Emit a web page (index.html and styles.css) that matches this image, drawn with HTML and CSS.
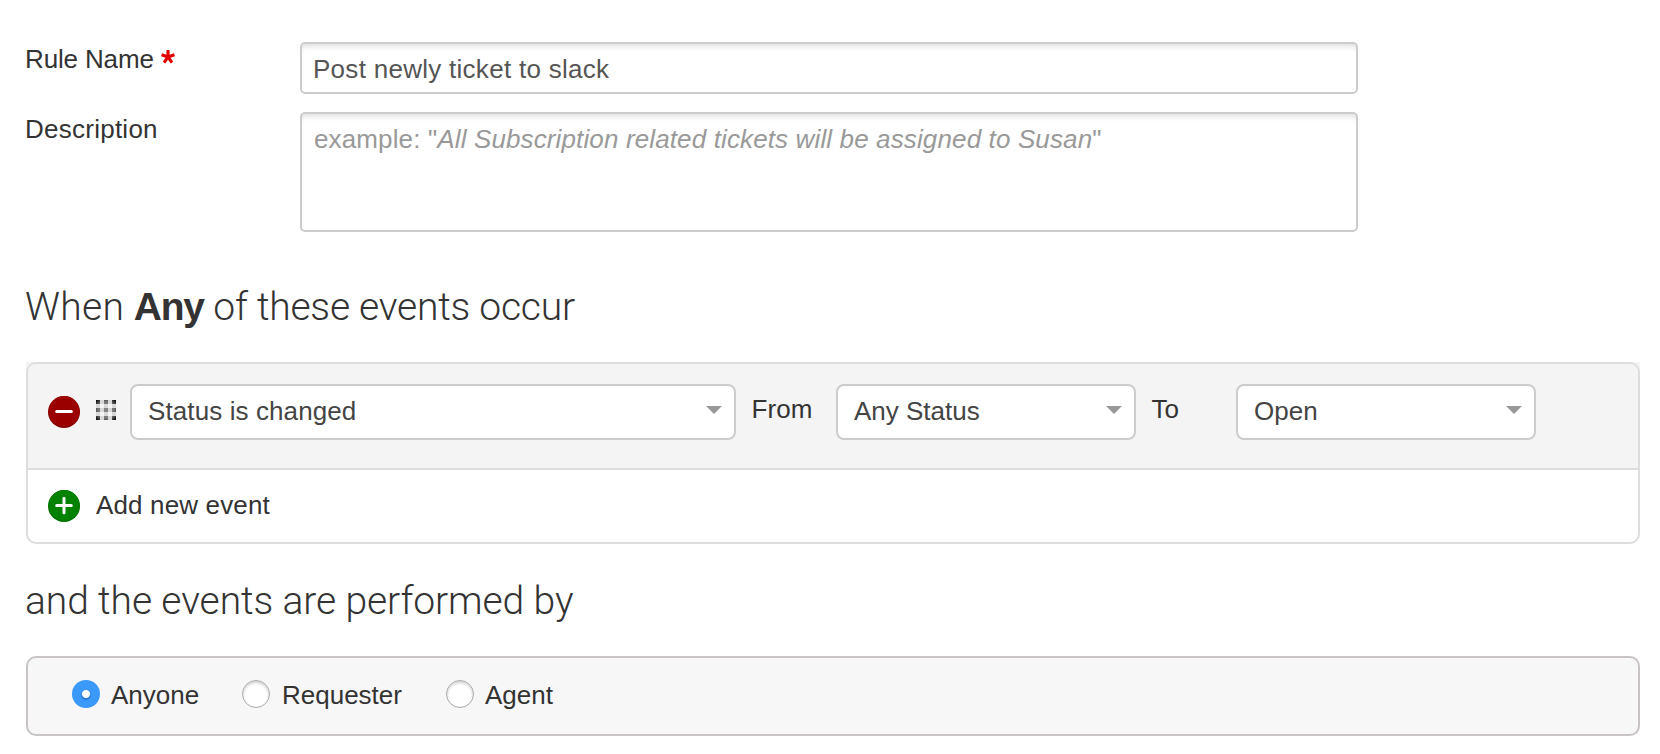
FILE: index.html
```html
<!DOCTYPE html>
<html lang="en">
<head>
<meta charset="utf-8">
<title>Rule</title>
<link rel="stylesheet" href="styles.css">
</head>
<body>
<main class="page">
  <div class="field">
    <div class="label"><span class="rule-label">Rule Name</span><svg class="required" width="14" height="14" viewBox="0 0 14 14"><path d="M7 7V0M7 7L.5 4.8M7 7L13.500 4.800M7 7L3 12.600M7 7L11 12.600" stroke="#e00000" stroke-width="3.100" fill="none"/></svg></div>
    <div class="control name">Post newly ticket to slack</div>
  </div>
  <div class="field">
    <div class="label wide">Description</div>
    <div class="control description">example: "<em>All Subscription related tickets will be assigned to Susan</em>"</div>
  </div>

  <h2 class="heading events-heading"><span class="when">When</span> <strong>Any</strong> <span class="occur">of these events occur</span></h2>
  <div class="events-back">
  <section class="events">
    <div class="event-row">
      <svg class="round" width="32" height="32" viewBox="0 0 32 32"><circle cx="16" cy="16" r="16" fill="#870000"/><circle cx="16.200" cy="15.300" r="15.300" fill="#9b0000"/><path d="M8.700 15.500h14.600" stroke="#fff" stroke-width="3" stroke-linecap="round"/></svg>
      <svg class="grip" width="20" height="20" viewBox="0 0 20 20">
        <defs>
          <radialGradient id="fade" gradientUnits="userSpaceOnUse" cx="10" cy="10" r="14">
            <stop offset="0" stop-color="#888"/><stop offset=".6" stop-color="#777"/><stop offset="1" stop-color="#000"/>
          </radialGradient>
        </defs>
        <path d="M0 2h20M0 10h20M0 18h20M2 0v20M10 0v20M18 0v20" stroke="#d8d8d8" stroke-width="4"/>
        <path fill="url(#fade)" d="M0 0h4v4H0zM8 0h4v4H8zM16 0h4v4h-4zM0 8h4v4H0zM8 8h4v4H8zM16 8h4v4h-4zM0 16h4v4H0zM8 16h4v4H8zM16 16h4v4h-4z"/>
      </svg>
      <div class="select select-event"><span>Status is changed</span><i class="caret"></i></div>
      <span class="word from">From</span>
      <div class="select select-status"><span>Any Status</span><i class="caret"></i></div>
      <span class="word to">To</span>
      <div class="select select-status"><span>Open</span><i class="caret"></i></div>
    </div>
    <div class="add-row">
      <svg class="round" width="32" height="32" viewBox="0 0 32 32"><circle cx="16" cy="16" r="16" fill="#007000"/><circle cx="16.200" cy="15.300" r="15.300" fill="#008200"/><path d="M8.700 15.500h14.600M16 8.200v14.600" stroke="#fff" stroke-width="3" stroke-linecap="round"/></svg>
      <span class="add-text">Add new event</span>
    </div>
  </section>
  </div>

  <h2 class="heading performer-heading">and the events are performed by</h2>
  <section class="performers">
    <label class="option anyone"><i class="radio checked"></i><span>Anyone</span></label>
    <label class="option requester"><i class="radio"></i><span>Requester</span></label>
    <label class="option agent"><i class="radio"></i><span>Agent</span></label>
  </section>
</main>
</body>
</html>
```
FILE: styles.css
```css
* { box-sizing: border-box; }

body {
  margin: 0;
  background: #fff;
  color: #333;
  font: 26px/30px "Liberation Sans", Arial, sans-serif;
}

.page { padding: 42px 20px 0 26px; }

.field {
  display: flex;
  align-items: flex-start;
  margin-bottom: 18px;
}

.label {
  display: flex;
  width: 274px;
  padding-top: 2px;
}

.rule-label { letter-spacing: -0.15px; margin-left: -1px; }
.label.wide { letter-spacing: 0.25px; text-indent: -1px; }
.required { margin: 6px 0 0 7px; }

.control {
  width: 1058px;
  border: 2px solid #ccc;
  border-radius: 5px;
  background: #fff;
  box-shadow: inset 0 7px 6px -5px rgba(0, 0, 0, 0.14);
}

.name {
  height: 52px;
  padding: 10px 11px;
  color: #555;
  letter-spacing: 0.28px;
}

.description {
  height: 120px;
  padding: 10px 12px;
  color: #999;
  letter-spacing: 0.13px;
}

.heading {
  margin: 0 0 0 -1px;
  font: 300 39px/46px Roboto, "Liberation Sans", sans-serif;
  color: #333;
}

.heading strong {
  font-family: "Liberation Sans", Arial, sans-serif;
  font-weight: 700;
  letter-spacing: -1.2px;
}

.events-heading { margin-top: 52px; }
.when { letter-spacing: 0.3px; }
.occur { letter-spacing: -0.23px; }

.events-back {
  width: 1614px;
  margin-top: 32px;
  background: linear-gradient(#f4f4f4 40px, #fff 40px);
}

.events {
  height: 182px;
  border: 2px solid #ddd;
  border-radius: 10px;
  overflow: hidden;
}

.event-row {
  display: flex;
  height: 106px;
  padding: 20px 0 0 20px;
  align-items: flex-start;
  background: #f4f4f4;
  border-bottom: 2px solid #ddd;
}

.event-row .round { margin-top: 12px; }
.grip { margin: 16px 14px 0 16px; }

.select {
  display: flex;
  justify-content: space-between;
  height: 56px;
  padding: 10px 12px 0 16px;
  border: 2px solid #ccc;
  border-radius: 8px;
  background: #fff;
  color: #444;
  letter-spacing: 0.1px;
}

.select-event { width: 606px; }
.select-status { width: 300px; letter-spacing: 0; }

.caret {
  width: 16px;
  height: 8px;
  margin-top: 10px;
  background: #999;
  clip-path: polygon(0 0, 100% 0, 50% 100%);
}

.word {
  width: 100px;
  padding: 10px 0 0 15.5px;
  letter-spacing: 0.1px;
}

.add-row {
  display: flex;
  align-items: flex-start;
  padding: 20px;
}

.add-text { margin-left: 16px; letter-spacing: 0.15px; }

.performer-heading { margin-top: 34px; letter-spacing: -0.1px; }

.performers {
  display: flex;
  width: 1614px;
  height: 80px;
  margin-top: 32px;
  padding: 22px 0 0 44px;
  border: 2px solid #c8c4c4;
  border-radius: 10px;
  background: #f7f7f7;
}

.option { display: flex; }
.option span { margin-left: 11px; }
.anyone { width: 170px; }
.requester { width: 204px; }
.requester span { margin-left: 12px; }

.radio {
  width: 28px;
  height: 28px;
  border: 1px solid #aaa;
  border-radius: 50%;
  background: #fff;
  box-shadow: inset 0 2px 3px rgba(0, 0, 0, 0.18);
}

.radio.checked {
  border: 0;
  background: radial-gradient(circle at 50% 50%, #fff 3.600px, transparent 4.400px), radial-gradient(circle at 50% 55%, #2878d0 3.600px, #3b99fc 5.500px);
  box-shadow: none;
}
```
